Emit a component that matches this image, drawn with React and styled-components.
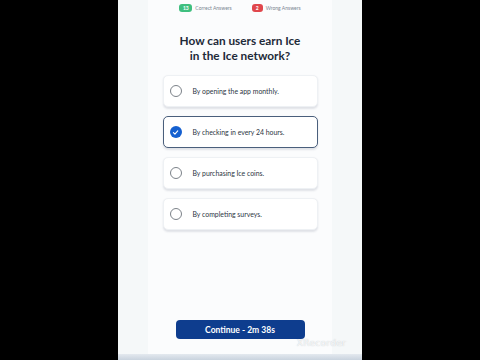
import React from "react";
import styled, { createGlobalStyle } from "styled-components";

const Global = createGlobalStyle`
  html, body { margin: 0; padding: 0; background: #000; }
  body { font-family: Lato, "Noto Sans", sans-serif; }
`;

const Stage = styled.div`
  width: 480px;
  height: 360px;
  background: #000;
  display: flex;
  justify-content: center;
  overflow: hidden;
`;

const Phone = styled.div`
  width: 244px;
  height: 360px;
  background: #f5f8f9;
  display: flex;
  flex-direction: column;
  position: relative;
`;

const Panel = styled.div`
  margin: 0 30px;
  flex: 1;
  background: #fbfcfd;
  display: flex;
  flex-direction: column;
  align-items: center;
`;

const Stats = styled.div`
  display: flex;
  gap: 20px;
  margin-top: 2px;
  height: 12px;
  align-items: center;
`;

const Stat = styled.div`
  display: flex;
  align-items: center;
  gap: 3px;
  font-size: 5px;
  color: #7a8591;
`;

const Badge = styled.span`
  display: inline-flex;
  align-items: center;
  justify-content: center;
  min-width: ${p => (p.$wide ? "11px" : "9px")};
  height: 8px;
  padding: 0 1px;
  border-radius: 3px;
  background: ${p => p.$color};
  color: #fff;
  font-size: 5px;
  font-weight: 700;
`;

const Title = styled.h1`
  margin: 20px 0 0 0;
  font-size: 11.8px;
  line-height: 14.5px;
  font-weight: 700;
  color: #1e2a39;
  text-align: center;
`;

const Options = styled.div`
  margin-top: 12px;
  display: flex;
  flex-direction: column;
  gap: 9px;
  width: 155px;
`;

const Option = styled.div`
  height: 32px;
  box-sizing: border-box;
  background: #fff;
  border-radius: 5px;
  border: 1px solid ${p => (p.$selected ? "#4a5f7c" : "#eef1f4")};
  box-shadow: 0 1.5px 2px rgba(30, 45, 70, 0.12);
  display: flex;
  align-items: center;
  padding-left: 6px;
  gap: 11px;
`;

const Radio = styled.span`
  width: 12px;
  height: 12px;
  box-sizing: border-box;
  border-radius: 50%;
  border: ${p => (p.$checked ? "none" : "1.4px solid #7c8289")};
  background: ${p => (p.$checked ? "#1560d0" : "transparent")};
  display: inline-flex;
  align-items: center;
  justify-content: center;
  flex-shrink: 0;
`;

const Label = styled.span`
  font-size: 6.9px;
  color: #2d3644;
`;

const Spacer = styled.div`
  flex: 1;
`;

const Button = styled.button`
  width: 129px;
  height: 19px;
  margin-bottom: 21px;
  border: none;
  border-radius: 4px;
  background: #0e3d8e;
  color: #fff;
  font-family: Lato, "Noto Sans", sans-serif;
  font-weight: 700;
  font-size: 8.5px;
  padding: 0;
  display: flex;
  align-items: center;
  justify-content: center;
`;

const BottomBar = styled.div`
  position: absolute;
  left: 0;
  right: 0;
  bottom: 0;
  height: 6px;
  background: linear-gradient(#e4e9ef, #c9d3de);
`;

const Watermark = styled.div`
  position: absolute;
  right: 16px;
  bottom: 12px;
  font-size: 9px;
  font-family: "DejaVu Sans", sans-serif;
  color: rgba(255, 255, 255, 0.85);
  text-shadow: 0 0 1px rgba(120, 130, 140, 0.5);
  letter-spacing: 0.3px;
`;

const options = [
  "By opening the app monthly.",
  "By checking in every 24 hours.",
  "By purchasing Ice coins.",
  "By completing surveys.",
];

export default function App() {
  return (
    <>
      <Global />
      <Stage>
        <Phone>
          <Panel>
            <Stats>
              <Stat>
                <Badge $color="#3fbf7f" $wide>13</Badge>
                Correct Answers
              </Stat>
              <Stat>
                <Badge $color="#e0474c">2</Badge>
                Wrong Answers
              </Stat>
            </Stats>
            <Title>
              How can users earn Ice
              <br />
              in the Ice network?
            </Title>
            <Options>
              {options.map((o, i) => (
                <Option key={o} $selected={i === 1}>
                  <Radio $checked={i === 1}>
                    {i === 1 && (
                      <svg width="7" height="7" viewBox="0 0 10 10">
                        <path d="M2 5.2 L4.2 7.3 L8.2 2.8" fill="none" stroke="#fff" strokeWidth="1.6" strokeLinecap="round" strokeLinejoin="round" />
                      </svg>
                    )}
                  </Radio>
                  <Label>{o}</Label>
                </Option>
              ))}
            </Options>
            <Spacer />
            <Button type="button">Continue - 2m 38s</Button>
          </Panel>
          <Watermark>XRecorder</Watermark>
          <BottomBar />
        </Phone>
      </Stage>
    </>
  );
}
